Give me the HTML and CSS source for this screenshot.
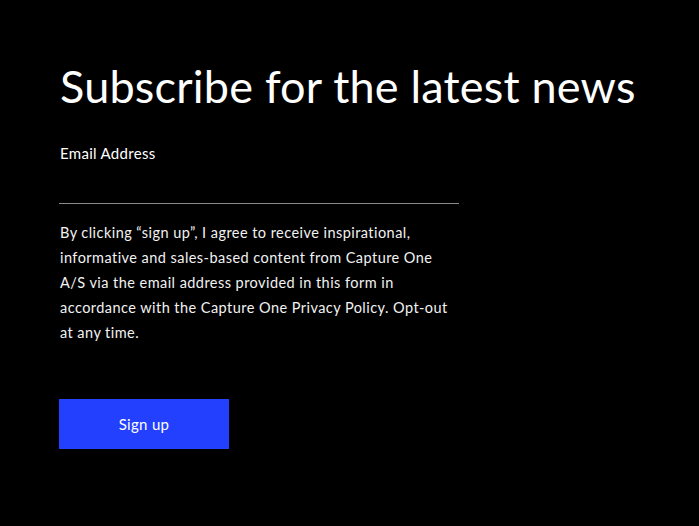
FILE: index.html
```html
<!DOCTYPE html>
<html lang="en">
<head>
    <meta charset="UTF-8">
    <meta name="viewport" content="width=device-width, initial-scale=1.0">
    <title>Subscribe</title>
    <link rel="stylesheet" href="styles.css">
</head>
<body>
    <div class="newsletter">
        <h1 class="newsletter-title">Subscribe for the latest news</h1>
        <form class="newsletter-form">
            <label class="field-label" for="email">Email Address</label>
            <input class="field-input" type="email" id="email">
            <p class="consent">By clicking “sign up”, I agree to receive inspirational, informative and sales-based content from Capture One A/S via the email address provided in this form in accordance with the Capture One Privacy Policy. Opt-out at any time.</p>
            <button class="signup-btn" type="button">Sign up</button>
        </form>
    </div>
</body>
</html>
```

FILE: styles.css
```css
body {
    font-family: Lato, "Open Sans", sans-serif;
    margin: 0;
    padding: 0;
    background-color: #000;
    color: #fff;
}

.newsletter {
    padding: 58px 59px;
}

.newsletter-title {
    font-size: 45px;
    font-weight: 400;
    line-height: 56px;
    letter-spacing: 0.2px;
    margin: 0 0 29px 1px;
}

.newsletter-form {
    width: 400px;
    display: flex;
    flex-direction: column;
    align-items: flex-start;
}

.field-label {
    font-size: 15px;
    line-height: 20px;
    letter-spacing: 0.3px;
    margin-left: 1px;
}

.field-input {
    width: 400px;
    height: 34px;
    box-sizing: border-box;
    margin: 7px 0 0;
    padding: 0;
    background: transparent;
    border: none;
    border-bottom: 1px solid #8a8a8a;
    color: #fff;
    outline: none;
}

.consent {
    font-size: 14.5px;
    line-height: 25px;
    letter-spacing: 0.45px;
    margin: 16px 0 0 1px;
    color: #f2f2f2;
}

.signup-btn {
    margin-top: 54px;
    width: 170px;
    height: 50px;
    background-color: #2340ff;
    color: #fff;
    border: none;
    font-family: inherit;
    font-size: 15px;
    letter-spacing: 0.3px;
    cursor: pointer;
}
```
